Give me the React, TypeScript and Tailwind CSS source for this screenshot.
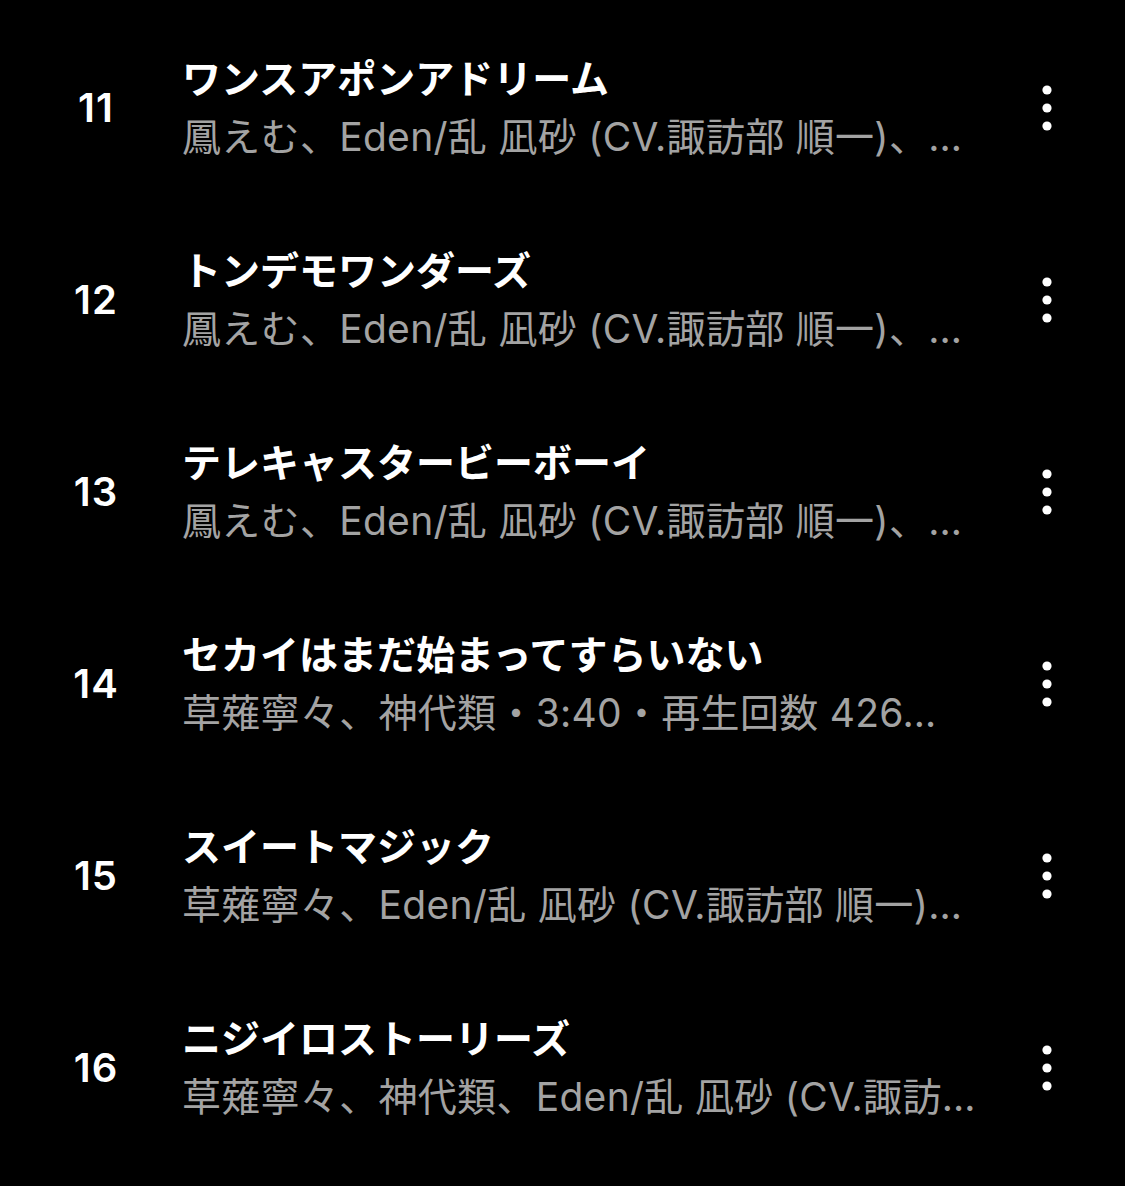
import type React from "react"

interface Track {
  no: number
  title: string
  sub: string
}

const tracks: Track[] = [
  { no: 11, title: "ワンスアポンアドリーム", sub: "鳳えむ、Eden/乱 凪砂 (CV.諏訪部 順一)、…" },
  { no: 12, title: "トンデモワンダーズ", sub: "鳳えむ、Eden/乱 凪砂 (CV.諏訪部 順一)、…" },
  { no: 13, title: "テレキャスタービーボーイ", sub: "鳳えむ、Eden/乱 凪砂 (CV.諏訪部 順一)、…" },
  { no: 14, title: "セカイはまだ始まってすらいない", sub: "草薙寧々、神代類・3:40・再生回数 426…" },
  { no: 15, title: "スイートマジック", sub: "草薙寧々、Eden/乱 凪砂 (CV.諏訪部 順一)…" },
  { no: 16, title: "ニジイロストーリーズ", sub: "草薙寧々、神代類、Eden/乱 凪砂 (CV.諏訪…" },
]

const font = "font-['Inter','Noto_Sans_CJK_JP',sans-serif]"

const MoreIcon: React.FC = () => (
  <svg width="24" height="48" viewBox="0 0 24 48" fill="#ffffff">
    <circle cx="12" cy="6" r="4.6" />
    <circle cx="12" cy="24" r="4.6" />
    <circle cx="12" cy="42" r="4.6" />
  </svg>
)

const TrackRow: React.FC<{ track: Track }> = ({ track }) => (
  <div className="flex h-[192px] items-center pl-[48px] pr-[66px]">
    <div className="w-[96px] text-center text-[40px] font-semibold leading-none tracking-[1px] text-white">
      {track.no}
    </div>
    <div className="ml-[38px] flex min-w-0 flex-1 flex-col">
      <div className="whitespace-nowrap text-[39px] font-bold leading-[58px] text-white">{track.title}</div>
      <div className="overflow-hidden whitespace-nowrap text-[39px] leading-[58px] tracking-[0.3px] text-[#a3a3a3]">
        {track.sub}
      </div>
    </div>
    <div className="flex w-[24px] items-center justify-center">
      <MoreIcon />
    </div>
  </div>
)

export default function App() {
  return (
    <div className={`min-h-[1186px] w-full bg-black pt-[12px] ${font}`}>
      {tracks.map((t) => (
        <TrackRow key={t.no} track={t} />
      ))}
    </div>
  )
}
